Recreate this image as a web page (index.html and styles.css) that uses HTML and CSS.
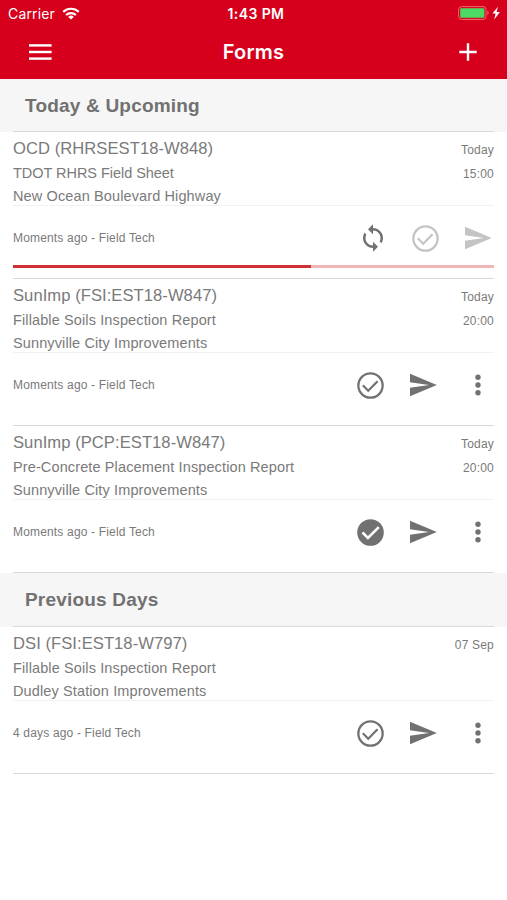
FILE: index.html
```html
<!DOCTYPE html>
<html lang="en">
<head>
  <meta charset="UTF-8">
  <meta name="viewport" content="width=device-width, initial-scale=1.0">
  <title>Forms</title>
  <link rel="stylesheet" href="styles.css">
</head>
<body>

  <svg class="sprite" width="0" height="0">
    <symbol id="check-outline" viewBox="0 0 26 26">
      <circle cx="13" cy="13" r="11.7" fill="none" stroke="currentColor" stroke-width="2.2"/>
      <path d="M5.6 12.8l5.2 5.2 9-9.2" fill="none" stroke="currentColor" stroke-width="2.1"/>
    </symbol>
    <symbol id="check-filled" viewBox="0 0 26 26">
      <circle cx="13" cy="13" r="12.8" fill="currentColor"/>
      <path d="M5.3 13l5.2 5.2L21 7.8" fill="none" stroke="#fff" stroke-width="2.5"/>
    </symbol>
    <symbol id="send" viewBox="0 0 27 24">
      <path d="M0 0.8L26.8 12 0 23.2V14.8L19 12 0 9.2z" fill="currentColor"/>
    </symbol>
    <symbol id="more" viewBox="0 0 6 22">
      <circle cx="3" cy="3.2" r="2.7" fill="currentColor"/>
      <circle cx="3" cy="11" r="2.7" fill="currentColor"/>
      <circle cx="3" cy="18.8" r="2.7" fill="currentColor"/>
    </symbol>
    <symbol id="sync" viewBox="1.8 0.8 20.4 22.4">
      <path d="M12 4V1L8 5l4 4V6c3.31 0 6 2.69 6 6 0 1.01-.25 1.97-.7 2.8l1.46 1.46C19.54 15.03 20 13.57 20 12c0-4.42-3.58-8-8-8zm0 14c-3.31 0-6-2.69-6-6 0-1.01.25-1.97.7-2.8L5.24 7.74C4.46 8.97 4 10.43 4 12c0 4.42 3.58 8 8 8v3l4-4-4-4v3z" fill="currentColor"/>
    </symbol>
  </svg>

  <header class="header">
    <div class="status">
      <div class="carrier">
        <span>Carrier</span>
        <svg width="18" height="13" viewBox="0 0 18 13" fill="none" stroke="#fff" stroke-width="2.2">
          <path d="M1.2 4.9a11.2 11.2 0 0 1 15.6 0"/>
          <path d="M4.1 8a7.1 7.1 0 0 1 9.8 0"/>
          <path d="M9 12.6L6.2 9.9a4 4 0 0 1 5.6 0z" fill="#fff" stroke="none"/>
        </svg>
      </div>
      <div class="time">1:43 PM</div>
      <div class="battery">
        <svg width="43" height="14" viewBox="0 0 43 14">
          <rect x=".6" y=".6" width="27.4" height="12.8" rx="3" fill="none" stroke="#ec6a70" stroke-width="1"/>
          <rect x="2.2" y="2.2" width="24.2" height="9.6" rx="1.4" fill="#4cd964"/>
          <path d="M29.4 4.8c1.6.5 1.6 3.9 0 4.4z" fill="#ec6a70"/>
          <path d="M40 .8l-5.6 6.8h3.2l-1.4 5.8 5.8-7.4h-3.4z" fill="#fff"/>
        </svg>
      </div>
    </div>
    <div class="navbar">
      <svg class="menu" width="23" height="16" viewBox="0 0 23 16" fill="#fff">
        <rect y="0.2" width="22.6" height="2.4"/>
        <rect y="6.8" width="22.6" height="2.4"/>
        <rect y="13.4" width="22.6" height="2.4"/>
      </svg>
      <h1>Forms</h1>
      <svg class="add" width="18" height="18" viewBox="0 0 18 18" stroke="#fff" stroke-width="2.4">
        <path d="M9 .3v17.4M.3 9h17.4"/>
      </svg>
    </div>
  </header>

  <main>
    <h2 class="section first"><span>Today &amp; Upcoming</span></h2>

    <article class="card">
      <div class="info">
        <div class="details">
          <h3>OCD (RHRSEST18-W848)</h3>
          <p class="form-type">TDOT RHRS Field Sheet</p>
          <p>New Ocean Boulevard Highway</p>
        </div>
        <div class="date"><p>Today</p><p>15:00</p></div>
      </div>
      <div class="footer">
        <span class="edited">Moments ago - Field Tech</span>
        <div class="actions syncing">
          <svg class="sync"><use href="#sync"/></svg>
          <svg class="check disabled"><use href="#check-outline"/></svg>
          <svg class="send disabled"><use href="#send"/></svg>
        </div>
      </div>
      <div class="progress"><div class="bar" style="width: 62%"></div></div>
    </article>

    <article class="card">
      <div class="info">
        <div class="details">
          <h3>SunImp (FSI:EST18-W847)</h3>
          <p>Fillable Soils Inspection Report</p>
          <p>Sunnyville City Improvements</p>
        </div>
        <div class="date"><p>Today</p><p>20:00</p></div>
      </div>
      <div class="footer">
        <span class="edited">Moments ago - Field Tech</span>
        <div class="actions">
          <svg class="check"><use href="#check-outline"/></svg>
          <svg class="send"><use href="#send"/></svg>
          <svg class="more"><use href="#more"/></svg>
        </div>
      </div>
    </article>

    <article class="card">
      <div class="info">
        <div class="details">
          <h3>SunImp (PCP:EST18-W847)</h3>
          <p>Pre-Concrete Placement Inspection Report</p>
          <p>Sunnyville City Improvements</p>
        </div>
        <div class="date"><p>Today</p><p>20:00</p></div>
      </div>
      <div class="footer">
        <span class="edited">Moments ago - Field Tech</span>
        <div class="actions">
          <svg class="check"><use href="#check-filled"/></svg>
          <svg class="send"><use href="#send"/></svg>
          <svg class="more"><use href="#more"/></svg>
        </div>
      </div>
    </article>

    <h2 class="section"><span>Previous Days</span></h2>

    <article class="card">
      <div class="info">
        <div class="details">
          <h3>DSI (FSI:EST18-W797)</h3>
          <p>Fillable Soils Inspection Report</p>
          <p>Dudley Station Improvements</p>
        </div>
        <div class="date"><p>07 Sep</p></div>
      </div>
      <div class="footer">
        <span class="edited">4 days ago - Field Tech</span>
        <div class="actions">
          <svg class="check"><use href="#check-outline"/></svg>
          <svg class="send"><use href="#send"/></svg>
          <svg class="more"><use href="#more"/></svg>
        </div>
      </div>
    </article>
  </main>

</body>
</html>
```

FILE: styles.css
```css
* {
  box-sizing: border-box;
}

body {
  margin: 0;
  background: #fff;
  color: #7a7a7a;
  font-family: "Liberation Sans", Arial, sans-serif;
}

h1, h2, h3, p {
  margin: 0;
}

svg {
  display: block;
  flex: none;
}

.sprite {
  display: none;
}

.header {
  height: 79px;
  background: #d6001c;
  color: #fff;
  font-family: Inter, sans-serif;
}

.status {
  display: grid;
  grid-template-columns: 1fr auto 1fr;
  align-items: center;
  height: 27px;
  padding: 0 5px 0 8px;
  font-size: 14px;
}

.carrier {
  display: flex;
  align-items: center;
  gap: 7px;
  letter-spacing: 0.15px;
}

.time {
  padding-left: 2px;
  font-size: 14px;
  font-weight: 600;
  letter-spacing: 0.4px;
}

.battery {
  justify-self: end;
  margin: -1px 1px 0 0;
}

.navbar {
  display: grid;
  grid-template-columns: 1fr auto 1fr;
  align-items: center;
  height: 50px;
  padding: 0 30px 0 29px;
}

.navbar h1 {
  padding-left: 1px;
  font-size: 20px;
  font-weight: 600;
  letter-spacing: 0.2px;
}

.add {
  justify-self: end;
}

.section {
  height: 54px;
  padding: 0 13px;
  background: #f6f6f6;
  color: #717171;
  font-size: 19px;
  line-height: 54px;
  letter-spacing: 0.2px;
}

.section span {
  display: block;
  height: 100%;
  padding-left: 12px;
  border-bottom: 1px solid #d9d9d9;
}

.section.first {
  height: 53px;
  line-height: 53px;
}

.card {
  height: 147px;
  margin: 0 13px;
  border-bottom: 1px solid #d9d9d9;
}

.info {
  display: flex;
  justify-content: space-between;
  height: 74px;
  padding-top: 5px;
  border-bottom: 1px solid #f2f2f2;
}

.details h3 {
  margin-bottom: 1px;
  font-size: 16.6px;
  font-weight: normal;
  line-height: 24px;
  letter-spacing: 0.05px;
}

.details p {
  font-size: 14.5px;
  line-height: 23px;
  letter-spacing: 0.12px;
}

.details .form-type {
  letter-spacing: -0.04px;
}

.date {
  padding-top: 1px;
  font-size: 12px;
  line-height: 24px;
  letter-spacing: 0.2px;
  text-align: right;
}

.footer {
  display: flex;
  justify-content: space-between;
  align-items: center;
  height: 64px;
}

.edited {
  font-size: 12px;
  letter-spacing: 0.17px;
}

.actions {
  display: flex;
  align-items: center;
  gap: 26px;
  padding-right: 13px;
  color: #717171;
}

.actions.syncing {
  padding-right: 2px;
}

.check {
  width: 27px;
  height: 27px;
}

.send {
  width: 27px;
  height: 24px;
}

.more {
  width: 6px;
  height: 22px;
  margin-left: 12px;
}

.sync {
  width: 26px;
  height: 28px;
}

.disabled {
  color: #c4c4c4;
}

.progress {
  margin-top: -5px;
  background: #f0b5b5;
}

.bar {
  height: 3px;
  background: #cf3031;
}
```
